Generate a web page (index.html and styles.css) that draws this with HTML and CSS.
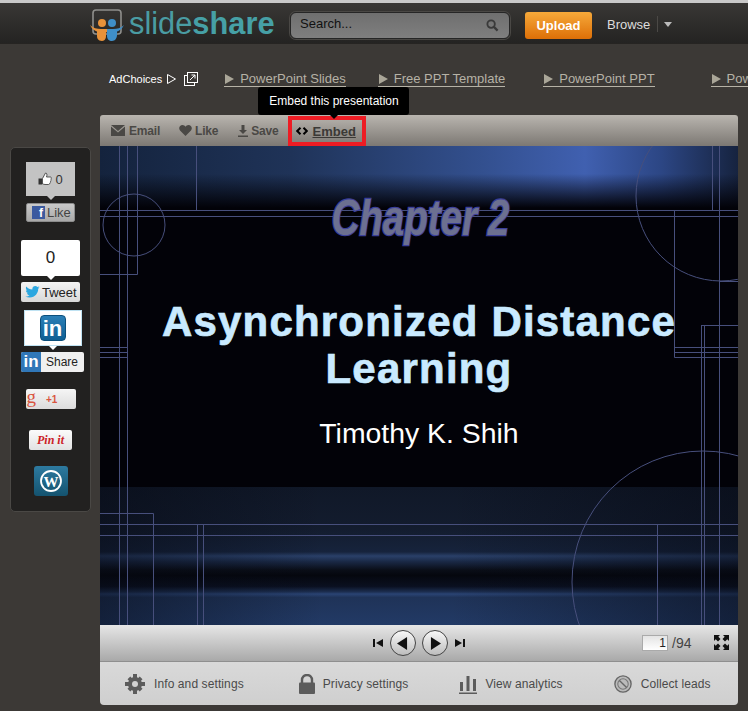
FILE: index.html
```html
<!DOCTYPE html>
<html lang="en">
<head>
<meta charset="utf-8">
<title>Asynchronized Distance Learning</title>
<link rel="stylesheet" href="styles.css">
</head>
<body>
<div class="topstrip"></div>
<header class="header">
  <svg class="logo-icon" viewBox="0 0 36 36" width="36" height="36">
    <rect x="4" y="2" width="28" height="24" rx="3" fill="none" stroke="#8f8f8c" stroke-width="1.6"/>
    <path d="M1 17c3 3 7 4 11 4h6v3c-3 2-8 1-9 0-3-1-6-3-8-7z" fill="#e8923a"/>
    <path d="M35 17c-3 3-7 4-11 4h-6v3c3 2 8 1 9 0 3-1 6-3 8-7z" fill="#3f8fc9"/>
    <circle cx="13" cy="15" r="4" fill="#e8923a"/>
    <circle cx="23" cy="15" r="4" fill="#3f8fc9"/>
    <path d="M8 22h9v6c0 2-1 5-4 5-4 0-5-3-5-5z" fill="#e8923a"/>
    <path d="M18 22h10v5c0 3-2 6-5 6-3 0-5-2-5-5z" fill="#3f8fc9"/>
  </svg>
  <div class="logo-text">slide<b>share</b></div>
  <div class="search">
    <span class="search-label">Search...</span>
    <svg viewBox="0 0 14 14" width="13" height="13"><circle cx="5.500" cy="5.500" r="4" fill="none" stroke="#3a3a3a" stroke-width="2"/><path d="M8.500 8.500l4 4" stroke="#3a3a3a" stroke-width="2.400"/></svg>
  </div>
  <div class="upload">Upload</div>
  <div class="browse">Browse</div>
  <div class="browse-sep"></div>
  <div class="caret"></div>
</header>

<div class="adbar">
  <span class="adchoices">AdChoices</span>
  <svg class="ad-tri" viewBox="0 0 11 12" width="11" height="12"><path d="M1.500 1.500v9l8-4.500z" fill="none" stroke="#fff" stroke-width="1"/></svg>
  <svg class="ad-ext" viewBox="0 0 14 14" width="14" height="14"><rect x="0.500" y="3.500" width="10" height="10" fill="none" stroke="#fff"/><rect x="3.500" y="0.500" width="10" height="10" fill="#3c3936" stroke="#fff"/><path d="M6 8l5-5M7.500 3H11v3.500" fill="none" stroke="#fff"/></svg>
  <a class="adlink adlink-a"><i class="tri"></i>PowerPoint Slides</a>
  <a class="adlink adlink-b"><i class="tri"></i>Free PPT Template</a>
  <a class="adlink adlink-c"><i class="tri"></i>PowerPoint PPT</a>
  <a class="adlink adlink-d"><i class="tri"></i>PowerPoint</a>
</div>

<main class="main">
  <aside class="share">
    <div class="count count-fb"><svg viewBox="0 0 14 14" width="14" height="14"><path d="M0.500 6.500h3.500v6H0.500z" fill="#333"/><path d="M4.500 6.500l3-5.500c1.500 0 1.800 1.500 1 4h4c1 0 1 1.500 .3 2 .6 .8 .3 1.800-.3 2 .3 1-.1 1.700-.7 2 0 1-.6 1.500-1.300 1.500H7c-1 0-1.500-.5-2.500-.5z" fill="#fff" stroke="#333" stroke-width=".8"/></svg><span>0</span></div>
    <div class="btn btn-fb"><i class="fb-f">f</i><span>Like</span></div>
    <div class="count count-tw">0</div>
    <div class="btn btn-tw">
      <svg viewBox="0 0 24 20" width="15" height="12"><path d="M24 2.400c-.9.400-1.800.7-2.800.8 1-.6 1.800-1.600 2.200-2.700-1 .6-2 1-3.100 1.200C19.300.7 18 0 16.600 0c-2.700 0-4.900 2.200-4.900 4.900 0 .4 0 .8.100 1.100C7.700 5.800 4.100 3.900 1.700.9c-.4.700-.7 1.600-.7 2.500 0 1.700.9 3.200 2.200 4.100-.8 0-1.600-.2-2.200-.6v.1c0 2.400 1.700 4.400 3.900 4.800-.4.100-.8.200-1.300.2-.3 0-.6 0-.9-.1.600 2 2.400 3.400 4.600 3.400-1.700 1.300-3.800 2.100-6.100 2.100-.4 0-.8 0-1.200-.1C2.200 18.200 4.800 19 7.500 19c9.100 0 14-7.500 14-14v-.6c1-.7 1.800-1.600 2.500-2z" fill="#2ca7e0"/></svg>
      <span>Tweet</span>
    </div>
    <div class="count count-in"><i class="in-big">in</i></div>
    <div class="btn btn-in"><i class="in-small">in</i><span>Share</span></div>
    <div class="btn btn-g"><i class="g-mark">g</i><span>+1</span></div>
    <div class="btn btn-pin">Pin it</div>
    <div class="wp">
      <svg viewBox="0 0 22 22" width="22" height="22"><circle cx="11" cy="11" r="10" fill="none" stroke="#fff" stroke-width="1.800"/><text x="11" y="16.500" text-anchor="middle" class="wp-w">W</text></svg>
    </div>
  </aside>

  <section class="player">
    <div class="toolbar">
      <span class="tool tool-email"><svg viewBox="0 0 14 11" width="14" height="11"><path d="M0 0h14L7 6z" fill="#4a4845"/><path d="M0 1.500v9.500h14V1.500L7 7.500z" fill="#4a4845"/></svg>Email</span>
      <span class="tool tool-like"><svg viewBox="0 0 13 11" width="13" height="11"><path d="M6.500 11L1 5.500C-1 3 1 0 3.500 0c1.300 0 2.300.7 3 1.800C7.200.7 8.200 0 9.500 0 12 0 14 3 12 5.500z" fill="#4a4845"/></svg>Like</span>
      <span class="tool tool-save"><svg viewBox="0 0 10 12" width="10" height="12"><path d="M3.500 0h3v5H9L5 9 1 5h2.500zM0 10.500h10V12H0z" fill="#4a4845"/></svg>Save</span>
      <span class="tool tool-embed">
        <svg viewBox="0 0 12 8" width="12" height="8"><path d="M4.500 .8L1.200 4l3.300 3.200M7.500 .8L10.800 4 7.500 7.200" fill="none" stroke="#000" stroke-width="2"/></svg>
        <u>Embed</u>
        <span class="tooltip">Embed this presentation</span>
      </span>
    </div>

    <div class="slide">
      <div class="band-top"></div>
      <div class="band-bottom"></div>
      <svg class="slide-lines" viewBox="100 146 638 479" width="638" height="479">
        <g fill="none" stroke="#474f7c" stroke-width="1">
          <path d="M100 210.500H738M100 216.500H738M100 524.500H738M100 535.500H738"/>
          <path d="M119.500 146V625M127.500 146V625M137.500 146V274.500H100M196.500 146V210"/>
          <path d="M100 347.500H127M100 352.500H127M100 357.500H127"/>
          <path d="M100 513.500H153.500V625M197.500 524V625M203.500 524V625M657.500 524V625"/>
          <path d="M674.500 210V357.500H738M674 347.500H738M674 352.500H738M712.500 146V210M719.500 146V625M701.500 325.500V625M704.500 325V625M701 325.500H738M720 281.500H738"/>
          <circle cx="134" cy="225" r="31"/>
          <circle cx="721" cy="196" r="85"/>
          <circle cx="703" cy="582" r="131"/>
        </g>
      </svg>
      <div class="slide-text">
        <div class="chapter">Chapter 2</div>
        <h1 class="title">Asynchronized Distance<br>Learning</h1>
        <div class="author">Timothy K. Shih</div>
      </div>
    </div>

    <div class="controls">
      <div class="nav">
        <svg viewBox="0 0 10 10" width="10" height="10"><path d="M0 1h2v8H0zM10 1v8L3 5z" fill="#111"/></svg>
        <span class="round"><svg viewBox="0 0 12 14" width="11" height="13"><path d="M11 0v14L0 7z" fill="#111"/></svg></span>
        <span class="round"><svg viewBox="0 0 12 14" width="11" height="13"><path d="M1 0v14l11-7z" fill="#111"/></svg></span>
        <svg viewBox="0 0 10 10" width="10" height="10"><path d="M0 1v8l7-4zM8 1h2v8H8z" fill="#111"/></svg>
      </div>
      <div class="pager"><span class="page-input">1</span><span class="page-total">/94</span></div>
      <svg class="fullscreen" viewBox="0 0 15 15" width="15" height="15"><path d="M0 0h6L4.300 1.700 6.500 4 4 6.500 1.700 4.300 0 6zM15 0v6l-1.700-1.700L11 6.500 8.500 4l2.200-2.300L9 0zM0 15V9l1.700 1.700L4 8.500 6.500 11l-2.200 2.300L6 15zM15 15H9l1.700-1.700L8.500 11 11 8.500l2.300 2.200L15 9z" fill="#111"/></svg>
    </div>

    <div class="info">
      <span class="info-item item-settings">
        <svg viewBox="0 0 20 20" width="20" height="20"><g fill="#5c5c5c"><circle cx="10" cy="10" r="7"/><path d="M8 0h4v4H8zM8 16h4v4H8zM0 8h4v4H0zM16 8h4v4h-4zM2.500 5.300L5.300 2.500 8 5.200 5.200 8zM14.700 17.500l2.800-2.800-2.700-2.700-2.800 2.800zM17.500 5.300L14.700 2.500 12 5.200 14.800 8zM5.300 17.500L2.500 14.700 5.200 12 8 14.800z"/></g><circle cx="10" cy="10" r="3" fill="#d2d2d2"/></svg>
        Info and settings
      </span>
      <span class="info-item item-privacy">
        <svg viewBox="0 0 18 20" width="18" height="20"><path d="M4 9V6a5 5 0 0 1 10 0v3" fill="none" stroke="#5c5c5c" stroke-width="2.400"/><rect x="1" y="8.500" width="16" height="11.500" rx="1" fill="#5c5c5c"/></svg>
        Privacy settings
      </span>
      <span class="info-item item-analytics">
        <svg viewBox="0 0 18 20" width="18" height="20"><path d="M1 8h3v9H1zM7.500 2h3v15h-3zM14 5h3v12h-3zM0 18.500h18V20H0z" fill="#5c5c5c"/></svg>
        View analytics
      </span>
      <span class="info-item">
        <svg viewBox="0 0 20 20" width="18" height="18"><circle cx="10" cy="10" r="9" fill="#bbb" stroke="#666" stroke-width="1.500"/><circle cx="10" cy="10" r="5.800" fill="none" stroke="#777" stroke-width="1.200"/><path d="M6 6l8 8" stroke="#666" stroke-width="1.500"/></svg>
        Collect leads
      </span>
    </div>
  </section>
</main>
</body>
</html>
```
FILE: styles.css
```css
* { box-sizing: border-box; }
html, body { margin: 0; padding: 0; }
body {
  width: 748px;
  height: 711px;
  overflow: hidden;
  background: #3c3936;
  font-family: "Liberation Sans", Arial, sans-serif;
}
.topstrip { height: 3px; background: #c9c9c9; }

/* header */
.header {
  height: 41px;
  display: flex;
  align-items: center;
  padding-left: 89px;
  background: linear-gradient(#393735, #242322);
  border-bottom: 1px solid #262422;
}
.logo-icon { flex: none; margin-top: 5px; }
.logo-text {
  margin: 1px 0 0 4px;
  width: 161px;
  font-size: 30.800px;
  color: #4a9ca3;
}
.logo-text b { color: #46a0a6; }
.search {
  width: 220px;
  height: 27px;
  margin-top: 4px;
  display: flex;
  align-items: center;
  justify-content: space-between;
  padding: 0 10px 0 9px;
  background: linear-gradient(#6f6f6f, #7f7f7f);
  border: 1px solid #262626;
  border-radius: 6px;
  box-shadow: 0 0 0 1px #4a4845;
  font-size: 13px;
  color: #111;
}
.search-label { margin-bottom: 4px; }
.search svg { margin-top: 1px; }
.upload {
  width: 67px;
  height: 27px;
  margin: 4px 0 0 15px;
  background: linear-gradient(#f6a93a, #dd6f07);
  border-radius: 3px;
  color: #fff;
  font-size: 13px;
  font-weight: bold;
  line-height: 27px;
  text-align: center;
}
.browse { margin: 3px 0 0 15px; color: #ddd; font-size: 13px; }
.browse-sep { width: 1px; height: 16px; margin: 1px 0 0 7px; background: #4b4946; }
.caret {
  margin: 3px 0 0 6px;
  border-top: 5px solid #bbb;
  border-left: 4px solid transparent;
  border-right: 4px solid transparent;
}

/* ad bar */
.adbar {
  height: 71px;
  padding: 28px 0 0 109px;
  display: flex;
  align-items: flex-start;
  white-space: nowrap;
  overflow: hidden;
}
.adchoices { font-size: 11px; color: #fff; line-height: 15px; }
.ad-tri { margin: 1px 0 0 4px; flex: none; }
.ad-ext { margin: 0 0 0 7px; flex: none; }
.adlink {
  display: flex;
  align-items: center;
  height: 15px;
  font-size: 13px;
  line-height: 14px;
  color: #b6b2a6;
  border-bottom: 1px solid #b6b2a6;
  flex: none;
}
.adlink-a { margin-left: 26px; }
.adlink-b { margin-left: 32px; }
.adlink-c { margin-left: 38px; }
.adlink-d { margin-left: 56px; }
.tri {
  width: 0;
  height: 0;
  margin: 0 6px 0 1px;
  border-left: 9px solid #aaa698;
  border-top: 5px solid transparent;
  border-bottom: 5px solid transparent;
}

/* layout */
.main { display: flex; align-items: flex-start; padding-left: 10px; }

/* share column */
.share {
  width: 81px;
  height: 365px;
  margin-top: 32px;
  padding-top: 14px;
  display: flex;
  flex-direction: column;
  align-items: center;
  background: #222120;
  border: 1px solid #4a4845;
  border-radius: 5px;
  flex: none;
}
.count {
  position: relative;
  display: flex;
  align-items: center;
  justify-content: center;
}
.count::after {
  content: "";
  position: absolute;
  left: 50%;
  bottom: -4px;
  margin-left: -4px;
  border-left: 4px solid transparent;
  border-right: 4px solid transparent;
}
.count-fb {
  width: 49px;
  height: 34px;
  gap: 3px;
  background: #c3c3c3;
  color: #333;
  font-size: 13px;
}
.count-fb::after { border-top: 4px solid #c3c3c3; }
.count-tw {
  width: 59px;
  height: 36px;
  margin-top: 18px;
  background: #fff;
  border-radius: 2px;
  color: #222;
  font-size: 17px;
}
.count-tw::after { border-top: 4px solid #fff; }
.count-in {
  width: 58px;
  height: 36px;
  margin: 8px 0 0 4px;
  background: #fff;
  border: 1px solid #bfe2f2;
}
.count-in::after { border-top: 4px solid #fff; bottom: -5px; }
.btn {
  display: flex;
  align-items: center;
  border-radius: 2px;
  font-size: 13px;
  color: #222;
}
.btn-fb {
  width: 49px;
  height: 19px;
  margin-top: 7px;
  padding-left: 5px;
  gap: 2px;
  background: linear-gradient(#c9c9c9, #a9a9a9);
  border: 1px solid #8c8c8c;
  color: #444;
}
.fb-f {
  width: 13px;
  height: 13px;
  background: #3b5a9f;
  color: #fff;
  font: bold 12px/14px "Liberation Sans", sans-serif;
  text-align: right;
  padding-right: 2px;
}
.btn-tw {
  width: 59px;
  height: 20px;
  margin-top: 6px;
  padding-left: 4px;
  gap: 2px;
  background: linear-gradient(#f4f4f4, #d8d8d8);
  font-size: 13px;
}
.in-big {
  width: 26px;
  height: 26px;
  background: linear-gradient(#2b7fb6, #0e5f93);
  border-radius: 4px;
  border: 1px solid #0b4f7c;
  color: #fff;
  font: bold 22px/26px "Liberation Sans", sans-serif;
  text-align: center;
}
.btn-in {
  width: 63px;
  height: 20px;
  margin: 6px 0 0 4px;
  background: #f0f0f0;
  font-size: 12px;
  gap: 5px;
}
.in-small {
  width: 20px;
  height: 20px;
  background: #3077b8;
  border-radius: 2px 0 0 2px;
  color: #fff;
  font: bold 17px/20px "Liberation Sans", sans-serif;
  text-align: center;
}
.btn-g {
  width: 50px;
  height: 20px;
  margin-top: 17px;
  padding-left: 1px;
  background: linear-gradient(#f5f5f5, #dcdcdc);
  color: #d9553f;
  font-size: 10px;
  font-weight: bold;
  gap: 10px;
}
.g-mark {
  font: normal 19px/18px "Liberation Serif", serif;
  color: #d9553f;
  margin-top: -4px;
}
.btn-pin {
  width: 43px;
  height: 20px;
  margin-top: 21px;
  justify-content: center;
  background: linear-gradient(#fbfbfb, #e2e2e2);
  color: #cc2127;
  font: italic bold 12px "Liberation Serif", serif;
}
.wp {
  width: 34px;
  height: 30px;
  margin-top: 16px;
  display: flex;
  align-items: center;
  justify-content: center;
  background: linear-gradient(#2d7aa0, #14536f);
  border-radius: 3px;
}
.wp-w { font: bold 15px "Liberation Serif", serif; fill: #fff; }

/* player */
.player { width: 638px; margin-left: 9px; flex: none; }
.toolbar {
  height: 31px;
  display: flex;
  align-items: center;
  padding-left: 11px;
  background: linear-gradient(#b9b5af, #7c7873);
  border-radius: 3px 3px 0 0;
  font-size: 12px;
  font-weight: bold;
  letter-spacing: -0.2px;
  color: #4a4845;
}
.tool { display: flex; align-items: center; gap: 4px; }
.tool-like { margin-left: 19px; gap: 3px; }
.tool-save { margin-left: 20px; gap: 3px; }
.tool-embed {
  position: relative;
  width: 78px;
  height: 30px;
  margin: 1px 0 0 10px;
  padding-left: 4px;
  border: 4px solid #ed1c24;
  font-size: 13px;
  letter-spacing: 0;
  color: #3b3936;
}
.tooltip {
  position: absolute;
  left: -34px;
  bottom: 27px;
  width: 151px;
  height: 28px;
  background: #000;
  border-radius: 3px;
  color: #fff;
  font-size: 12px;
  font-weight: normal;
  line-height: 28px;
  text-align: center;
  white-space: nowrap;
}
.tooltip::after {
  content: "";
  position: absolute;
  left: 50%;
  bottom: -4px;
  margin-left: -4px;
  border-top: 4px solid #000;
  border-left: 4px solid transparent;
  border-right: 4px solid transparent;
}

.slide {
  position: relative;
  height: 479px;
  background: #020208;
  overflow: hidden;
}
.band-top {
  position: absolute;
  inset: 0 0 auto 0;
  height: 62px;
  background:
    linear-gradient(rgba(2,2,8,0) 45%, #020208 100%),
    linear-gradient(90deg, #14233d 0%, #1f3358 30%, #33508f 60%, #4060b0 76%, #2c4684 88%, #16233f 100%);
}
.band-bottom {
  position: absolute;
  inset: auto 0 0 0;
  height: 138px;
  background:
    linear-gradient(90deg, rgba(5,8,18,.5), rgba(5,8,18,0) 35%, rgba(5,8,18,0) 55%, rgba(5,8,18,.5)),
    linear-gradient(#101828 0%, #131c2e 30%, #16233c 47%, #2a4069 50%, #1a2946 54%, #0a0e18 60%, #05070e 64%, #0a1020 72%, #1c2e50 76%, #2a4474 77.500%, #1f3358 80%, #223a66 100%);
}
.slide-lines { position: absolute; inset: 0; }
.slide-text {
  position: relative;
  display: flex;
  flex-direction: column;
  align-items: center;
  padding-top: 45px;
}
.chapter {
  height: 54px;
  margin-left: 2px;
  font: italic bold 50px/54px "Liberation Sans", sans-serif;
  color: #6c7090;
  -webkit-text-stroke: 2.500px #3b3f9a;
  paint-order: stroke fill;
  transform: scaleX(.77);
}
.title {
  margin: 53px 0 0 0;
  font-size: 42px;
  line-height: 47px;
  font-weight: bold;
  color: #c9eaff;
  text-align: center;
  letter-spacing: 1.200px;
  -webkit-text-stroke: 0.7px #c9eaff;
}
.author {
  margin-top: 25px;
  font-size: 28.400px;
  line-height: 32px;
  color: #fff;
}

.controls {
  position: relative;
  height: 37px;
  display: flex;
  align-items: center;
  padding-left: 273px;
  background: linear-gradient(#e6e6e6, #a9a9a9);
  border-bottom: 1px solid #8f8f8f;
}
.nav { display: flex; align-items: center; width: 92px; justify-content: space-between; }
.round {
  width: 26px;
  height: 26px;
  display: flex;
  align-items: center;
  justify-content: center;
  border-radius: 50%;
  background: linear-gradient(#f8f8f8, #bdbdbd);
  border: 1px solid #444;
}
.pager { margin-left: 177px; display: flex; align-items: center; font-size: 14px; color: #444; gap: 4px; }
.page-input {
  width: 26px;
  height: 16px;
  background: linear-gradient(#e4e4e4, #fff);
  border: 1px solid #aaa;
  font-size: 12px;
  line-height: 15px;
  color: #222;
  text-align: right;
  padding-right: 1px;
}
.fullscreen { margin-left: 23px; margin-top: -2px; }

.info {
  height: 43px;
  display: flex;
  align-items: center;
  gap: 51px;
  padding-left: 25px;
  background: linear-gradient(#d9d9d9, #cfcfcf);
  border-radius: 0 0 4px 4px;
  font-size: 12px;
  letter-spacing: 0.100px;
  color: #4a4a4a;
}
.info-item { display: flex; align-items: center; gap: 9px; white-space: nowrap; }
.item-settings { margin-right: 3px; }
.item-privacy { gap: 7px; }
.item-analytics { gap: 8px; }
```
